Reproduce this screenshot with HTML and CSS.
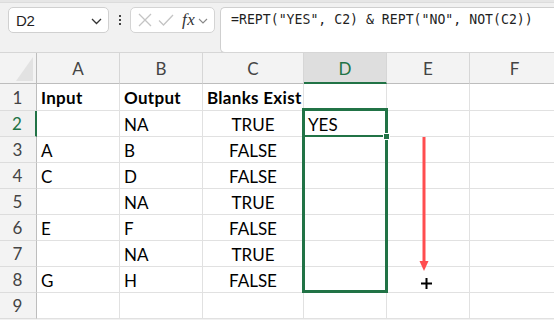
FILE: index.html
```html
<!DOCTYPE html>
<html>
<head>
<meta charset="utf-8">
<link rel="stylesheet" href="styles.css">
</head>
<body>
<div class="app">
  <div class="topline"></div>
  <div class="toolbar">
    <div class="namebox">
      <span class="name">D2</span>
      <svg class="chev" width="11" height="7" viewBox="0 0 11 7"><path d="M1 1 L5.5 5.5 L10 1" fill="none" stroke="#333" stroke-width="1.3"/></svg>
    </div>
    <div class="dots"><i></i><i></i><i></i></div>
    <div class="fxbox">
      <svg class="ico" width="16" height="16" viewBox="0 0 16 16"><path d="M2 2 L14 14 M14 2 L2 14" stroke="#c4c4c4" stroke-width="1.3" fill="none"/></svg>
      <svg class="ico" width="16" height="16" viewBox="0 0 16 16"><path d="M1 8.5 L5.5 13 L15 3" stroke="#c4c4c4" stroke-width="1.3" fill="none"/></svg>
      <span class="fx">fx</span>
      <svg class="chev2" width="10" height="6" viewBox="0 0 10 6"><path d="M1 1 L5 5 L9 1" fill="none" stroke="#888" stroke-width="1.1"/></svg>
    </div>
    <div class="formula">=REPT("YES", C2) &amp; REPT("NO", NOT(C2))</div>
  </div>
  <div class="sheet">
    <div class="grid">
      <div class="ch corner"><svg width="36" height="31" viewBox="0 0 36 31"><path d="M33 4 L33 28 L16 28 Z" fill="#e2e2e2"/></svg></div>
      <div class="ch">A</div>
      <div class="ch">B</div>
      <div class="ch">C</div>
      <div class="ch sel">D</div>
      <div class="ch">E</div>
      <div class="ch">F</div>

      <div class="rh">1</div>
      <div class="c b">Input</div><div class="c b">Output</div><div class="c b">Blanks Exist</div><div class="c"></div><div class="c"></div><div class="c"></div>

      <div class="rh rsel">2</div>
      <div class="c"></div><div class="c">NA</div><div class="c m">TRUE</div><div class="c">YES</div><div class="c"></div><div class="c"></div>

      <div class="rh">3</div>
      <div class="c">A</div><div class="c">B</div><div class="c m">FALSE</div><div class="c"></div><div class="c"></div><div class="c"></div>

      <div class="rh">4</div>
      <div class="c">C</div><div class="c">D</div><div class="c m">FALSE</div><div class="c"></div><div class="c"></div><div class="c"></div>

      <div class="rh">5</div>
      <div class="c"></div><div class="c">NA</div><div class="c m">TRUE</div><div class="c"></div><div class="c"></div><div class="c"></div>

      <div class="rh">6</div>
      <div class="c">E</div><div class="c">F</div><div class="c m">FALSE</div><div class="c"></div><div class="c"></div><div class="c"></div>

      <div class="rh">7</div>
      <div class="c"></div><div class="c">NA</div><div class="c m">TRUE</div><div class="c"></div><div class="c"></div><div class="c"></div>

      <div class="rh">8</div>
      <div class="c">G</div><div class="c">H</div><div class="c m">FALSE</div><div class="c"></div><div class="c"></div><div class="c"></div>

      <div class="rh">9</div>
      <div class="c"></div><div class="c"></div><div class="c"></div><div class="c"></div><div class="c"></div><div class="c"></div>
    </div>
    <div class="selbox"><div class="active"></div><div class="handle"></div></div>
    <svg class="arrow" width="14" height="140" viewBox="0 0 14 140"><line x1="7" y1="0" x2="7" y2="128" stroke="#ff4d4f" stroke-width="3"/><path d="M2.5 124 L11.5 124 L7 134 Z" fill="#ff4d4f"/></svg>
    <svg class="plus" width="13" height="13" viewBox="0 0 13 13"><path d="M6.5 1 V12 M1 6.5 H12" stroke="#000" stroke-width="2"/></svg>
  </div>
</div>
</body>
</html>
```

FILE: styles.css
```css
html, body { margin: 0; padding: 0; }
body { background: #f1f1f1; width: 554px; height: 320px; overflow: hidden; font-family: "Lato", "Open Sans", sans-serif; }
.app { position: relative; width: 554px; height: 320px; overflow: hidden; }
.topline { height: 2px; background: #e6e6e6; border-bottom: 1px solid #dcdcdc; }
.toolbar { display: flex; align-items: flex-start; height: 49px; padding-top: 4px; box-sizing: border-box; }
.namebox { margin-left: 8px; width: 101px; height: 26px; box-sizing: border-box; background: #fff; border: 1px solid #d0d0d0; border-radius: 5px; display: flex; align-items: center; justify-content: space-between; padding: 0 6px 0 7px; }
.name { font-family: "Liberation Sans", sans-serif; font-size: 15px; color: #1f1f1f; letter-spacing: -0.4px; }
.chev { margin-top: 2px; }
.dots { width: 21px; height: 26px; display: flex; flex-direction: column; align-items: center; justify-content: center; gap: 2px; }
.dots i { display: block; width: 2px; height: 2px; background: #444; }
.fxbox { width: 85px; height: 26px; box-sizing: border-box; background: #fff; border: 1px solid #d4d4d4; border-radius: 5px; display: flex; align-items: center; padding-left: 6px; }
.fxbox .ico { margin-right: 5px; }
.fxbox .ico + .ico { margin-right: 8px; }
.fx { font-family: "Liberation Serif", serif; font-style: italic; font-size: 17px; color: #333; letter-spacing: 0.5px; }
.chev2 { margin-left: 3px; margin-top: 1px; }
.formula { margin-left: 5px; flex: 1; height: 46px; box-sizing: border-box; background: #fff; border: 1px solid #cfcfcf; border-right: none; border-radius: 5px 0 0 5px; padding: 4px 0 0 10px; font-family: "DejaVu Sans Mono", monospace; font-size: 13.2px; color: #1f1f1f; white-space: nowrap; }
.sheet { position: relative; }
.grid { display: grid; grid-template-columns: 37px 83px 83px 101px 83px 83px 90px; grid-template-rows: 31px 27px repeat(8, 26px); border-top: 1px solid #d6d6d6; background: #fff; }
.grid > div { box-sizing: border-box; border-right: 1px solid #e1e1e1; border-bottom: 1px solid #e1e1e1; font-size: 17px; color: #000; white-space: nowrap; }
.ch { background: #f3f3f3; color: #444 !important; display: flex; align-items: center; justify-content: center; border-right-color: #d6d6d6 !important; border-bottom-color: #bdbdbd !important; font-size: 17px !important; padding-top: 1px; }
.corner { border-right-color: #bdbdbd !important; }
.corner svg { display: block; }
.ch.sel { background: #dedede; color: #217346 !important; border-bottom: 2px solid #217346 !important; }
.rh { background: #f3f3f3; color: #444 !important; display: flex; align-items: center; justify-content: center; border-right-color: #bdbdbd !important; border-bottom-color: #dcdcdc !important; padding-right: 1px; font-size: 17px !important; }
.rh.rsel { color: #217346 !important; border-right: 2px solid #217346 !important; background: #f0f0f0; }
.c { display: flex; align-items: center; padding-left: 4px; padding-top: 1px; }
.c.b { font-weight: 700; letter-spacing: 0.3px; }
.c.m { justify-content: center; padding-left: 0; }
.selbox { position: absolute; left: 302px; top: 56px; width: 86px; height: 185px; box-sizing: border-box; border: 3px solid #217346; }
.active { position: absolute; left: 0; right: 0; top: 24px; height: 2px; background: #217346; }
.handle { position: absolute; right: -5px; top: 22px; width: 5px; height: 5px; background: #217346; border: 1px solid #fff; }
.arrow { position: absolute; left: 417px; top: 85px; }
.plus { position: absolute; left: 420px; top: 225px; }
```
